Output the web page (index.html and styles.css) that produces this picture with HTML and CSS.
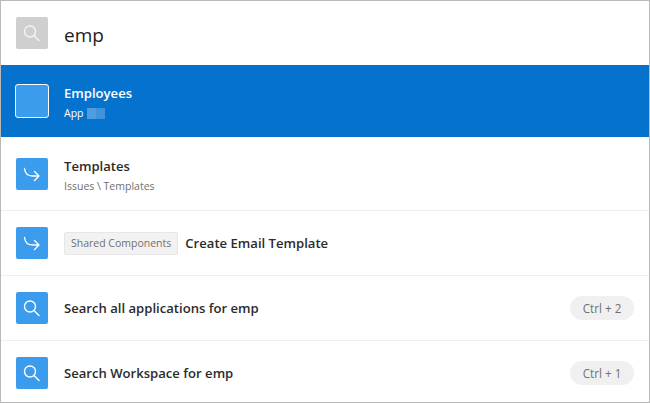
FILE: index.html
```html
<!DOCTYPE html>
<html lang="en">
<head>
<meta charset="utf-8">
<title>Search</title>
<link rel="stylesheet" href="styles.css">
</head>
<body>
<svg class="defs" width="0" height="0" aria-hidden="true">
  <symbol id="search" viewBox="0 0 32 32">
    <circle cx="14" cy="14.500" r="5.500" fill="none" stroke="currentColor" stroke-width="1.400"/>
    <path d="M18 18.500L23 23.500" fill="none" stroke="currentColor" stroke-width="1.400" stroke-linecap="round"/>
  </symbol>
  <symbol id="jump" viewBox="0 0 32 32">
    <path d="M8.500 10.500c.6 4.800 3.500 7.500 8 7.500H23M18.500 13.500L23 18l-4.500 4.500" fill="none" stroke="currentColor" stroke-width="1.400" stroke-linecap="round" stroke-linejoin="round"/>
  </symbol>
</svg>
<main class="window">
  <header class="search-bar">
    <span class="icon icon-grey"><svg><use href="#search"/></svg></span>
    <span class="query">emp</span>
  </header>
  <ul class="results">
    <li class="row row-two row-active">
      <span class="icon icon-app"></span>
      <div class="text">
        <div class="title">Employees</div>
        <div class="sub">App <span class="redacted"></span></div>
      </div>
    </li>
    <li class="row row-tall">
      <span class="icon"><svg><use href="#jump"/></svg></span>
      <div class="text">
        <div class="title">Templates</div>
        <div class="sub">Issues \ Templates</div>
      </div>
    </li>
    <li class="row">
      <span class="icon"><svg><use href="#jump"/></svg></span>
      <span class="tag">Shared Components</span>
      <span class="title">Create Email Template</span>
    </li>
    <li class="row">
      <span class="icon"><svg><use href="#search"/></svg></span>
      <span class="title">Search all applications for emp</span>
      <span class="shortcut">Ctrl + 2</span>
    </li>
    <li class="row row-last">
      <span class="icon"><svg><use href="#search"/></svg></span>
      <span class="title">Search Workspace for emp</span>
      <span class="shortcut">Ctrl + 1</span>
    </li>
  </ul>
</main>
</body>
</html>
```
FILE: styles.css
```css
* { box-sizing: border-box; }
html, body { margin: 0; padding: 0; }
body {
  width: 650px;
  height: 403px;
  overflow: hidden;
  background: #fff;
  font-family: "Open Sans", "Liberation Sans", sans-serif;
  color: #2b2b2b;
}
.defs { position: absolute; }
.window {
  width: 650px;
  height: 403px;
  border: 1px solid #b9b9b9;
  display: flex;
  flex-direction: column;
}
.search-bar {
  height: 64px;
  flex: none;
  display: flex;
  align-items: center;
  padding: 0 15px;
  gap: 16px;
}
.query {
  font-size: 19px;
  color: #1d1d1d;
  line-height: 32px;
  padding-top: 4px;
}
.results {
  list-style: none;
  margin: 0;
  padding: 0;
  flex: 1;
  display: flex;
  flex-direction: column;
}
.row {
  height: 65px;
  flex: none;
  display: flex;
  align-items: center;
  padding: 0 15px;
  border-bottom: 1px solid #eeeeee;
}
.row-two { height: 72px; border-bottom: 0; }
.row-tall { height: 74px; }
.row-last { border-bottom: 0; height: 62px; padding-top: 2px; }
.row-active { background: #0572ce; color: #fff; }
.icon {
  width: 32px;
  height: 32px;
  flex: none;
  border-radius: 2px;
  background: #3b9bec;
  color: #fff;
  display: flex;
  margin-right: 16px;
}
.search-bar .icon { margin-right: 0; }
.icon svg { width: 32px; height: 32px; }
.icon-grey { background: #cfcfcf; color: #f4f4f4; }
.icon-app {
  width: 34px;
  height: 34px;
  margin: 0 15px 0 -1px;
  border: 1px solid #fff;
  border-radius: 3px;
}
.text { display: flex; flex-direction: column; gap: 3px; padding-top: 3px; }
.title { font-size: 13.100px; font-weight: 600; line-height: 18px; }
.sub { font-size: 10.500px; line-height: 16px; color: #707070; display: flex; align-items: center; gap: 3px; }
.row-active .sub { color: #fff; }
.redacted { width: 18px; height: 11px; background: linear-gradient(90deg, #4f9de0 50%, #3f93dd 50%); }
.tag {
  font-size: 10.500px;
  line-height: 21px;
  height: 23px;
  padding: 0 6px;
  margin-right: 7px;
  color: #707070;
  background: #f2f2f2;
  border: 1px solid #e6e6e6;
  border-radius: 2px;
}
.shortcut {
  margin-left: auto;
  height: 24px;
  line-height: 24px;
  width: 64px;
  text-align: center;
  border-radius: 12px;
  background: #f0f0f0;
  color: #707070;
  font-size: 11.700px;
}
```
